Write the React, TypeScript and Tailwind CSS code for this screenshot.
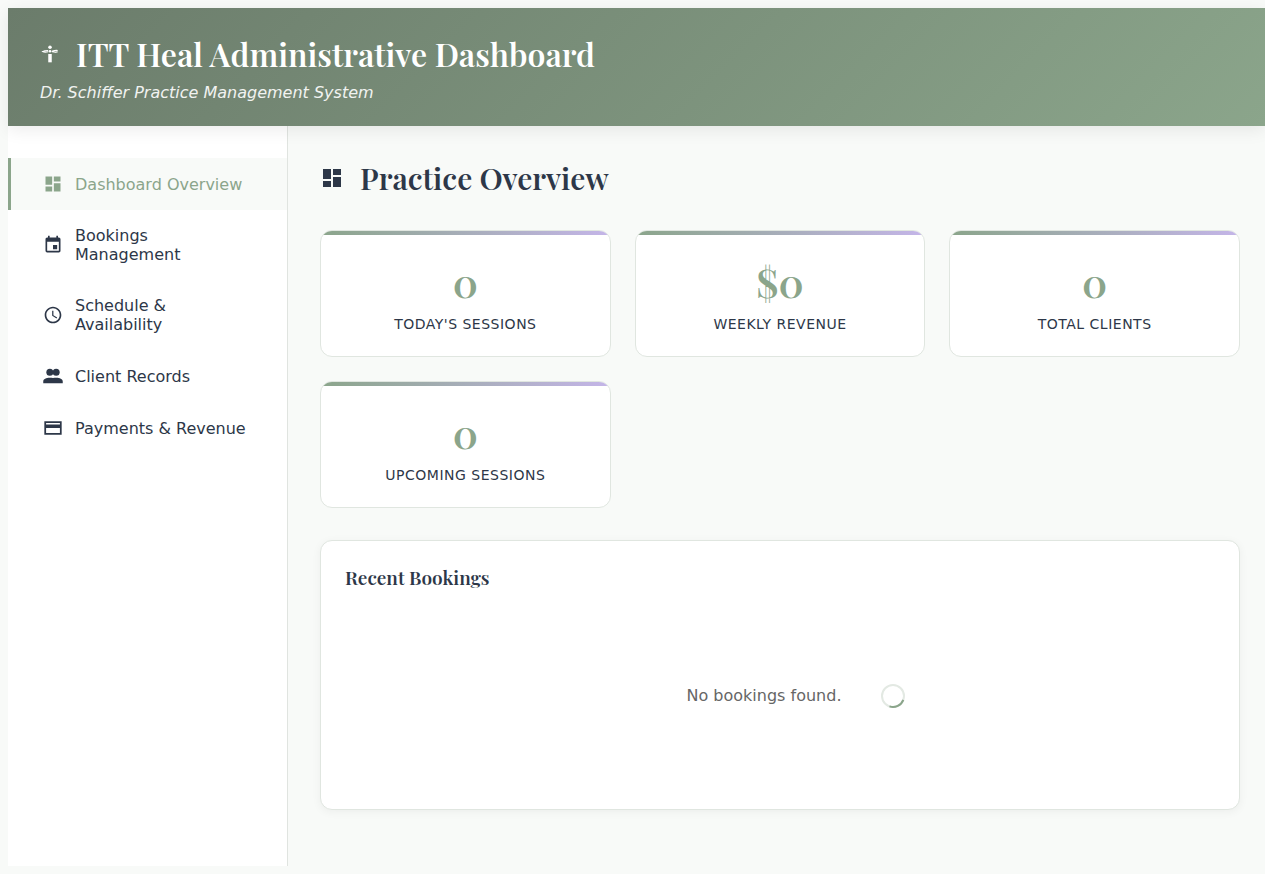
import React from "react";
import { MdDashboard, MdEvent, MdSchedule } from "react-icons/md";

const serif = "font-['Playfair_Display','Liberation_Serif',serif]";

function PeopleIcon({ className }: { className?: string }) {
  return (
    <svg viewBox="0 0 24 24" fill="currentColor" className={className} aria-hidden="true">
      <circle cx="8.2" cy="7.6" r="4.2" />
      <circle cx="15.8" cy="7.6" r="4.2" />
      <path d="M.3 20.600v-2.100C.3 15.500 4 14 8 14c1.500 0 2.800.200 4 .500 1.200-.300 2.500-.500 4-.500 4 0 7.700 1.500 7.700 4.500v2.100z" />
    </svg>
  );
}

function CardIcon({ className }: { className?: string }) {
  return (
    <svg viewBox="0 0 24 24" fill="currentColor" className={className} aria-hidden="true">
      <path fillRule="evenodd" d="M1.600 4h20.800v16H1.600zM3.700 6v1.800h16.600V6zM3.700 12v6h16.600v-6z" />
    </svg>
  );
}

function CrossIcon({ className }: { className?: string }) {
  return (
    <svg viewBox="0 0 24 24" fill="currentColor" className={className} aria-hidden="true">
      <circle cx="12" cy="4" r="2.100" />
      <circle cx="12" cy="8.800" r="1.500" />
      <path d="M9.900 12h4.200v10H9.900z" />
      <path
        d="M9.800 7.800C7.500 7.800 4.600 8 3 9.100c1.800.700 4.600.700 6.800.100M14.200 8.800c2-.800 4.800-1.200 7-1.100M14.200 9.400c1.800-.200 3 .100 4.300.600.800-.400 1.700-.600 2.700-.500"
        fill="none"
        stroke="currentColor"
        strokeWidth="1.300"
      />
    </svg>
  );
}

const nav = [
  { label: "Dashboard Overview", Icon: MdDashboard, active: true },
  { label: "Bookings Management", Icon: MdEvent },
  { label: "Schedule & Availability", Icon: MdSchedule },
  { label: "Client Records", Icon: PeopleIcon },
  { label: "Payments & Revenue", Icon: CardIcon },
];

const stats = [
  { value: "0", label: "Today's Sessions" },
  { value: "$0", label: "Weekly Revenue" },
  { value: "0", label: "Total Clients" },
  { value: "0", label: "Upcoming Sessions" },
];

export default function App() {
  return (
    <div className="flex min-h-screen flex-col bg-[#f8faf8] py-2 pl-2 font-['DejaVu_Sans',sans-serif] text-base text-[#2d3748]">
      <header className="z-10 bg-linear-135 from-[#6b7c6b] to-[#8ba58b] px-8 py-6 text-white shadow-[0_4px_16px_rgba(0,0,0,0.08)]">
        <h1 className={`${serif} flex items-center gap-4 text-[32px] leading-[43px] font-semibold`}>
          <CrossIcon className="size-5" />
          ITT Heal Administrative Dashboard
        </h1>
        <p className="mt-2 leading-[19px] italic opacity-90">Dr. Schiffer Practice Management System</p>
      </header>
      <div className="flex grow">
        <nav className="w-[280px] shrink-0 border-r border-[#e0e4e0] bg-white py-8" aria-label="Main">
          {nav.map(({ label, Icon, active }) => (
            <a
              key={label}
              href="#"
              className={`flex items-center gap-3 border-l-3 px-8 py-4 leading-[19px] ${
                active ? "border-[#8ba58b] bg-[#f8faf8] text-[#8ba58b]" : "border-transparent"
              }`}
            >
              <Icon className="size-5 shrink-0" />
              {label}
            </a>
          ))}
        </nav>
        <main className="min-w-0 grow pt-8 pr-[25px] pb-14 pl-8">
          <h2 className={`${serif} mb-8 flex items-center gap-4 text-[30px] leading-10 font-semibold`}>
            <MdDashboard className="size-6" />
            Practice Overview
          </h2>
          <div className="grid grid-cols-3 gap-6">
            {stats.map(({ value, label }) => (
              <section
                key={label}
                className="overflow-hidden rounded-xl border border-[#e0e6e0] bg-white text-center"
              >
                <div className="h-1 bg-linear-to-r from-[#8ba58b] to-[#c4b5e8]" />
                <div className="px-6 pt-5 pb-6">
                  <div className={`${serif} text-[40px] leading-[53px] font-semibold text-[#8ba58b]`}>{value}</div>
                  <div className="mt-2 text-sm leading-4 tracking-[0.5px] uppercase">{label}</div>
                </div>
              </section>
            ))}
          </div>
          <section className="mt-8 rounded-xl border border-[#e0e6e0] bg-white p-6 shadow-[0_2px_10px_rgba(0,0,0,0.05)]">
            <h3 className={`${serif} mb-0.5 text-[19px] leading-6 font-semibold`}>Recent Bookings</h3>
            <div className="flex h-[194px] items-center justify-center gap-10 pt-4 pl-8 text-[#666666]">
              <p>No bookings found.</p>
              <svg viewBox="0 0 24 24" className="size-6" fill="none" strokeWidth="2" aria-hidden="true">
                <circle cx="12" cy="12" r="11" stroke="#e3e9e3" />
                <path d="M22.300 15.800A11 11 0 0 1 8.500 22.400" stroke="#8ba58b" />
              </svg>
            </div>
          </section>
        </main>
      </div>
    </div>
  );
}
